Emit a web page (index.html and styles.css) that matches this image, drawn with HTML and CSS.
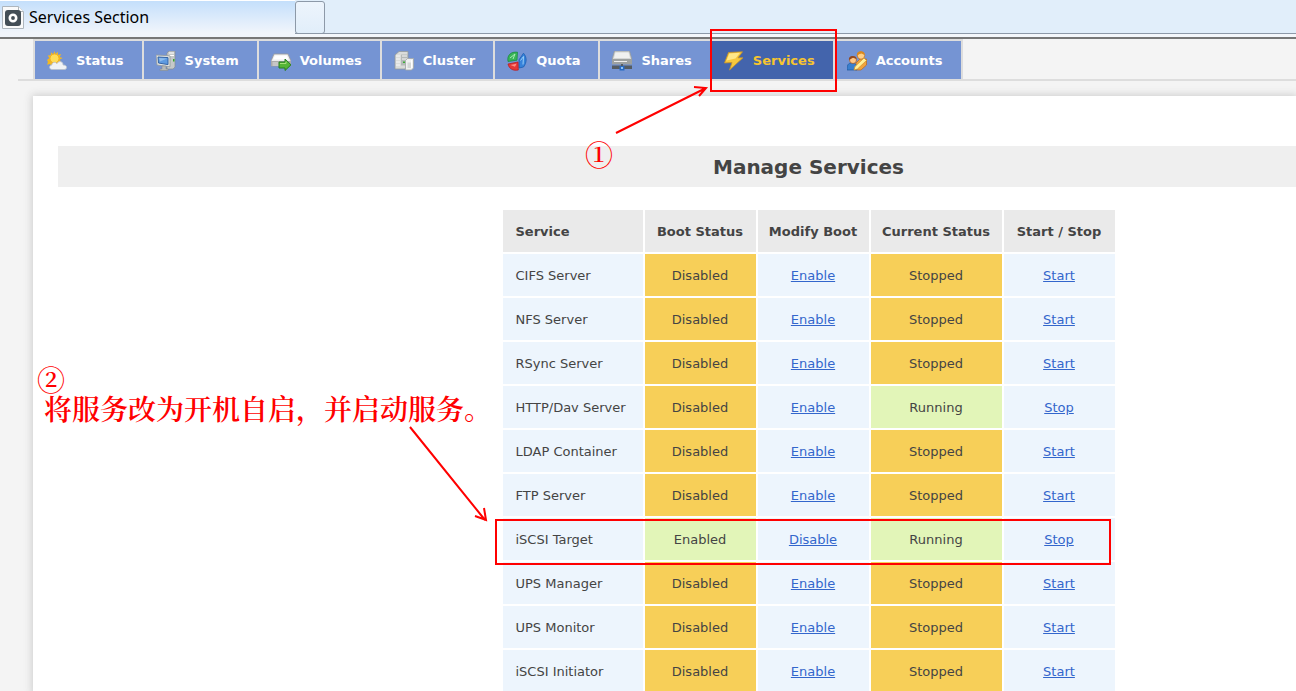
FILE: index.html
```html
<!DOCTYPE html>
<html lang="en">
<head>
<meta charset="utf-8">
<title>Services Section</title>
<link rel="stylesheet" href="styles.css">
</head>
<body>
<header class="tabstrip">
  <div class="tab">
    <svg class="favicon" viewBox="0 0 22 23"><path d="M.5.5h16l5 5v17H.5z" fill="#fafafa" stroke="#aeb6bd"/><path d="M16.500.5v5h5" fill="#fff" stroke="#aeb6bd"/><rect x="3" y="4" width="16" height="16" rx="3" fill="#434e56"/><circle cx="11" cy="12" r="3.200" fill="none" stroke="#fff" stroke-width="2.600"/></svg>
    <span>Services Section</span>
  </div>
  <button class="newtab" aria-label="New tab"></button>
</header>
<nav class="nav">
  <ul class="menu">
    <li><a href="#"><svg viewBox="0 0 20 20"><path d="M7.500 0l1 3 2.300-2.300.2 3.200 3.200-.8-1.500 2.800 3 1-2.800 1.500 1 3-9 4-2-2.400-2.800.7.800-3L0 9l2.400-2L.7 4.500l3-.2L4 1.300l2.300 2z" fill="#f3b823"/><circle cx="7.500" cy="7.500" r="4.500" fill="#ffdd58" stroke="#eea51c" stroke-width=".8"/><path d="M5 18.500c-3 0-3.400-4-.2-4.500 0-3 4.200-3.500 5-1.300 2.200-3.700 6.700-2 6.200 1.300 4.500-.4 4.800 4.500 1 4.500z" fill="#f0f2f5" stroke="#b9c0ca" stroke-width=".8"/></svg>Status</a></li>
    <li><a href="#"><svg viewBox="0 0 20 20"><path d="M11 2l2-2h6v16l-2 2h-6z" fill="#c5c9c9" stroke="#868d90" stroke-width=".7"/><path d="M13 2h5M13 4.500h5" stroke="#fff"/><path d="M17 8h1.500v2.500H17z" fill="#35a82f"/><path d="M0 4l14 .8v11L1 14z" fill="#e2e4e2" stroke="#92999d" stroke-width=".8"/><path d="M2 6l10 .6v7L2.500 12z" fill="#5f9be0" stroke="#3564a4"/><path d="M3 7l8 .5-7 3z" fill="#8fbdee"/><path d="M6 15h4v3h2v1.500H4V18h2z" fill="#b6bab9" stroke="#808688" stroke-width=".5"/></svg>System</a></li>
    <li><a href="#"><svg viewBox="0 0 20 20"><path d="M3 3h14l3 7v5H0v-5z" fill="#ececec" stroke="#999" stroke-width=".8"/><path d="M4 4.500h12l1.500 4H2z" fill="#fff"/><path d="M0 10h20v5H0z" fill="#aaa"/><path d="M1.500 12h9M1.500 14h9" stroke="#e2e2e2"/><path d="M8 11h6V8l6 5.800-6 5.700V17H8z" fill="#55b536" stroke="#267d22"/><path d="M9 12.500h6v-2" fill="none" stroke="#a5df78"/></svg>Volumes</a></li>
    <li><a href="#"><svg viewBox="0 0 20 20"><path d="M1 4l4-3.500h9v13L11 18H1z" fill="#dadcda" stroke="#969b9b" stroke-width=".8"/><path d="M7 3.500h7v11H7z" fill="#b5bab8"/><path d="M2 5h4M2 8h4M2 11h4M2 14h4M8 5h5M8 8h5" stroke="#f7f7f7"/><path d="M9 10.500h2v1.500H9z" fill="#3cae35"/><path d="M11.500 9.500l2-2h6V17l-2 2h-6z" fill="#f0f1f0" stroke="#a2a6a6" stroke-width=".8"/><path d="M13.500 11.500h3.500V17h-3.500z" fill="#d4d7d6"/><path d="M17.500 9v8" stroke="#fff"/></svg>Cluster</a></li>
    <li><a href="#"><svg viewBox="0 0 20 20"><path d="M1 10.500C-.2 4 4 .5 10.500 1.200l-.5 8z" fill="#38b457" stroke="#15863d" stroke-width=".7"/><path d="M3 7l5-4-2 5" fill="none" stroke="#a9ebb4"/><path d="M12 8.800l4.500-6.600C20 6 20 11.500 16.500 16L12 17z" fill="#3682da" stroke="#1457aa" stroke-width=".7"/><path d="M13.500 9.500l3-4-.5 8" fill="none" stroke="#98cff8"/><path d="M1 13l10-2 .3 8C6 20 2.200 18 1 13z" fill="#e43836" stroke="#b9151b" stroke-width=".7"/><path d="M3.500 14l6-1.300-1.500 3z" fill="#ff8d83"/></svg>Quota</a></li>
    <li><a href="#"><svg viewBox="0 0 20 20"><path d="M2.500 0h15L20 9v4H0V9z" fill="#d5d7d6" stroke="#989c9b" stroke-width=".8"/><path d="M3.500 1.500h13L18 7H2z" fill="#f0f1f0"/><path d="M0 8h20v5H0z" fill="#9da1a0"/><path d="M2 10.500h13" stroke="#ededed"/><path d="M0 14.500h20V18H0z" fill="#555c61"/><path d="M10 13v4" stroke="#555c61" stroke-width="2"/><path d="M7.500 15h5v4.500h-5z" fill="#286ac1"/><path d="M9 16h2v2H9z" fill="#8fc1f4"/></svg>Shares</a></li>
    <li><a href="#" class="current" aria-current="page"><svg viewBox="0 0 20 20"><path d="M4.500 1.500L18.500.8l-4.500 6h5L5.500 19l2.500-7.500-7.500.5z" fill="#f7c83d" stroke="#c79328" stroke-width=".8"/><path d="M5.300 2.500l10.700-.7-4.500 5.700-9 2z" fill="#ffe889"/></svg>Services</a></li>
    <li><a href="#"><svg viewBox="0 0 20 20"><path d="M8.500 19l.5-7 4-4h6.500v6L14 19z" fill="#f1a43d" stroke="#b9671c" stroke-width=".7"/><circle cx="14" cy="4.500" r="3.700" fill="#ffd087" stroke="#b76824" stroke-width=".7"/><path d="M10 5C8.500-1 18-1 17.700 4L14.500 2.500 12 3.200z" fill="#d8881f"/><path d="M0 19c0-5 1-7 5-7s5 2 5 7z" fill="#397fce" stroke="#1d579c" stroke-width=".7"/><circle cx="6" cy="9" r="3.500" fill="#ffc887" stroke="#985020" stroke-width=".7"/><path d="M2 9C1 3.500 10 4 9.500 8L6 6.800z" fill="#924822"/><path d="M8 15.500L17 7l2.500 2.500L10.500 18 7 19z" fill="#fff09a" stroke="#d69328" stroke-width=".8"/></svg>Accounts</a></li>
  </ul>
</nav>
<main class="content">
  <h1>Manage Services</h1>
  <div class="panel">
  <table class="services">
    <colgroup><col class="c-name"><col class="c-small"><col class="c-mid"><col class="c-wide"><col class="c-small"></colgroup>
    <thead><tr><th>Service</th><th>Boot Status</th><th>Modify Boot</th><th>Current Status</th><th>Start / Stop</th></tr></thead>
    <tbody>
      <tr><td>CIFS Server</td><td class="off">Disabled</td><td><a href="#">Enable</a></td><td class="off">Stopped</td><td><a href="#">Start</a></td></tr>
      <tr><td>NFS Server</td><td class="off">Disabled</td><td><a href="#">Enable</a></td><td class="off">Stopped</td><td><a href="#">Start</a></td></tr>
      <tr><td>RSync Server</td><td class="off">Disabled</td><td><a href="#">Enable</a></td><td class="off">Stopped</td><td><a href="#">Start</a></td></tr>
      <tr><td>HTTP/Dav Server</td><td class="off">Disabled</td><td><a href="#">Enable</a></td><td class="on">Running</td><td><a href="#">Stop</a></td></tr>
      <tr><td>LDAP Container</td><td class="off">Disabled</td><td><a href="#">Enable</a></td><td class="off">Stopped</td><td><a href="#">Start</a></td></tr>
      <tr><td>FTP Server</td><td class="off">Disabled</td><td><a href="#">Enable</a></td><td class="off">Stopped</td><td><a href="#">Start</a></td></tr>
      <tr><td>iSCSI Target</td><td class="on">Enabled</td><td><a href="#">Disable</a></td><td class="on">Running</td><td><a href="#">Stop</a></td></tr>
      <tr><td>UPS Manager</td><td class="off">Disabled</td><td><a href="#">Enable</a></td><td class="off">Stopped</td><td><a href="#">Start</a></td></tr>
      <tr><td>UPS Monitor</td><td class="off">Disabled</td><td><a href="#">Enable</a></td><td class="off">Stopped</td><td><a href="#">Start</a></td></tr>
      <tr><td>iSCSI Initiator</td><td class="off">Disabled</td><td><a href="#">Enable</a></td><td class="off">Stopped</td><td><a href="#">Start</a></td></tr>
    </tbody>
  </table>
  </div>
</main>
<div class="box box-nav"></div>
<div class="box box-row"></div>
<svg class="arrow arrow-nav" viewBox="0 0 96 50"><path d="M2 47L92 2M80 1l12 1-7 8"/></svg>
<svg class="arrow arrow-row" viewBox="0 0 82 100"><path d="M2 2l75 93M67 91l11 4-2-12"/></svg>
<span class="note note-one">①</span>
<span class="note note-two">②</span>
<span class="note note-text" lang="zh-CN">将服务改为开机自启，并启动服务。</span>
</body>
</html>
```
FILE: styles.css
```css
* { box-sizing: border-box; }
body {
  position: relative;
  min-height: 100vh;
  margin: 0;
  overflow: hidden;
  background: #f4f4f4;
  color: #444;
  font: 13px/18px "DejaVu Sans", Verdana, sans-serif;
}
.tabstrip {
  display: flex;
  align-items: flex-start;
  height: 39px;
  border-bottom: 2px solid #777;
  background: linear-gradient(#e1eefa 33px, #8d99a8 33px, #8d99a8 34px, #f4f7fb 34px);
}
.tab {
  display: flex;
  align-items: center;
  gap: 5px;
  width: 295px;
  height: 37px;
  padding: 0 2px 4px;
  border-top: 1px solid #fff;
  background: linear-gradient(#c4dffb, #f1f5fb 32px);
  color: #000;
  font: 16px/20px "Noto Sans", "Open Sans", sans-serif;
}
.favicon { width: 22px; height: 23px; }
.newtab {
  width: 30px;
  height: 33px;
  margin-top: 1px;
  padding: 0;
  border: 1px solid #8d99a8;
  border-radius: 3px;
  background: linear-gradient(#edf4fc, #e1eefa);
}
.nav {
  height: 42px;
  margin-left: 18px;
  padding-left: 15px;
  border-bottom: 2px solid #ddd;
}
.menu {
  display: flex;
  gap: 2px;
  width: max-content;
  margin: 0;
  padding: 2px 2px 0;
  background: #ddd;
  list-style: none;
}
.menu a {
  display: flex;
  align-items: center;
  gap: 9px;
  height: 38px;
  padding: 2px 18px 0 12px;
  background: #7594d3;
  color: #fff;
  font-weight: bold;
  text-decoration: none;
}
.menu svg { width: 20px; height: 20px; }
.menu .current { background: #4364ac; color: #f7c52f; }
.content {
  min-height: calc(100vh - 96px);
  margin: 15px 0 0 33px;
  padding: 50px 0 0 25px;
  background: #fff;
  box-shadow: 0 0 8px 1px #ccc;
}
h1 {
  margin: 0 0 21px;
  padding: 9px 0 7px 263px;
  background: #efefef;
  font-size: 20px;
  line-height: 25px;
  text-align: center;
}
.panel { padding-left: 263px; }
.services {
  margin: 0 auto;
  border-spacing: 2px;
  table-layout: fixed;
  width: 616px;
}
.c-name { width: 140px; }
.c-small { width: 111px; }
.c-mid { width: 111px; }
.c-wide { width: 131px; }
th, td { height: 42px; padding: 2px 0 0; text-align: center; }
th { background: #eaeaea; }
td { background: #edf5fd; }
th:first-child, td:first-child { padding-left: 13px; text-align: left; }
.off { background: #f7cf58; }
.on { background: #e2f5b8; }
td a { color: #36c; }
.box { position: absolute; border: 2px solid #f00; }
.box-nav { left: 710px; top: 29px; width: 127px; height: 63px; }
.box-row { left: 495px; top: 519px; width: 616px; height: 46px; }
.arrow { position: absolute; fill: none; stroke: #f00; stroke-width: 2; }
.arrow-nav { left: 614px; top: 86px; width: 96px; height: 50px; }
.arrow-row { left: 408px; top: 425px; width: 82px; height: 100px; }
.note {
  position: absolute;
  color: #f00;
  font: 600 28px/28px "Noto Serif CJK SC", "Noto Sans CJK SC", serif;
  white-space: nowrap;
}
.note-one { left: 585px; top: 140px; }
.note-two { left: 37px; top: 365px; }
.note-text { left: 44px; top: 394px; }
```
